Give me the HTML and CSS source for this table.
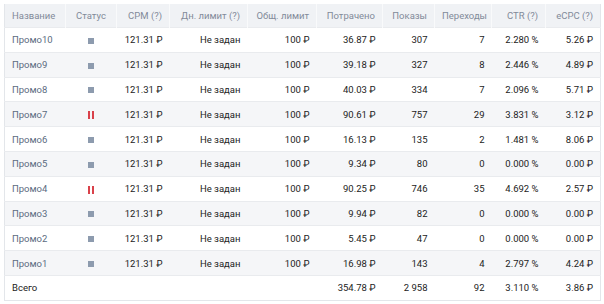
FILE: index.html
```html
<!DOCTYPE html>
<html lang="ru">
<head>
<meta charset="utf-8">
<link rel="stylesheet" href="styles.css">
</head>
<body>
<table class="stats">
  <colgroup>
    <col class="c-name"><col class="c-status"><col class="c-cpm"><col class="c-day"><col class="c-total"><col class="c-spent"><col class="c-views"><col class="c-clicks"><col class="c-ctr"><col class="c-ecpc">
  </colgroup>
  <thead>
    <tr>
      <th class="left">Название</th>
      <th class="center">Статус</th>
      <th>CPM (?)</th>
      <th>Дн. лимит (?)</th>
      <th>Общ. лимит</th>
      <th>Потрачено</th>
      <th>Показы</th>
      <th>Переходы</th>
      <th>CTR (?)</th>
      <th>eCPC (?)</th>
    </tr>
  </thead>
  <tbody>
    <tr><td class="name">Промо10</td><td class="center"><span class="st-stop"></span></td><td>121.31 ₽</td><td>Не задан</td><td>100 ₽</td><td>36.87 ₽</td><td>307</td><td>7</td><td>2.280 %</td><td>5.26 ₽</td></tr>
    <tr><td class="name">Промо9</td><td class="center"><span class="st-stop"></span></td><td>121.31 ₽</td><td>Не задан</td><td>100 ₽</td><td>39.18 ₽</td><td>327</td><td>8</td><td>2.446 %</td><td>4.89 ₽</td></tr>
    <tr><td class="name">Промо8</td><td class="center"><span class="st-stop"></span></td><td>121.31 ₽</td><td>Не задан</td><td>100 ₽</td><td>40.03 ₽</td><td>334</td><td>7</td><td>2.096 %</td><td>5.71 ₽</td></tr>
    <tr><td class="name">Промо7</td><td class="center"><span class="st-pause"></span></td><td>121.31 ₽</td><td>Не задан</td><td>100 ₽</td><td>90.61 ₽</td><td>757</td><td>29</td><td>3.831 %</td><td>3.12 ₽</td></tr>
    <tr><td class="name">Промо6</td><td class="center"><span class="st-stop"></span></td><td>121.31 ₽</td><td>Не задан</td><td>100 ₽</td><td>16.13 ₽</td><td>135</td><td>2</td><td>1.481 %</td><td>8.06 ₽</td></tr>
    <tr><td class="name">Промо5</td><td class="center"><span class="st-stop"></span></td><td>121.31 ₽</td><td>Не задан</td><td>100 ₽</td><td>9.34 ₽</td><td>80</td><td>0</td><td>0.000 %</td><td>0.00 ₽</td></tr>
    <tr><td class="name">Промо4</td><td class="center"><span class="st-pause"></span></td><td>121.31 ₽</td><td>Не задан</td><td>100 ₽</td><td>90.25 ₽</td><td>746</td><td>35</td><td>4.692 %</td><td>2.57 ₽</td></tr>
    <tr><td class="name">Промо3</td><td class="center"><span class="st-stop"></span></td><td>121.31 ₽</td><td>Не задан</td><td>100 ₽</td><td>9.94 ₽</td><td>82</td><td>0</td><td>0.000 %</td><td>0.00 ₽</td></tr>
    <tr><td class="name">Промо2</td><td class="center"><span class="st-stop"></span></td><td>121.31 ₽</td><td>Не задан</td><td>100 ₽</td><td>5.45 ₽</td><td>47</td><td>0</td><td>0.000 %</td><td>0.00 ₽</td></tr>
    <tr><td class="name">Промо1</td><td class="center"><span class="st-stop"></span></td><td>121.31 ₽</td><td>Не задан</td><td>100 ₽</td><td>16.98 ₽</td><td>143</td><td>4</td><td>2.797 %</td><td>4.24 ₽</td></tr>
  </tbody>
  <tfoot>
    <tr><td class="left">Всего</td><td></td><td></td><td></td><td></td><td>354.78 ₽</td><td>2 958</td><td>92</td><td>3.110 %</td><td>3.86 ₽</td></tr>
  </tfoot>
</table>
</body>
</html>
```
FILE: styles.css
```css
html, body {
  margin: 0;
  padding: 0;
  background: #fff;
}
body {
  padding: 4px 4px 0 4px;
  font-family: Roboto, "Noto Sans", "Liberation Sans", sans-serif;
  font-size: 9.5px;
  color: #222;
}
.stats {
  border-collapse: collapse;
  table-layout: fixed;
  width: 596px;
  border: 1px solid #e3e6ea;
  border-top: none;
}
.c-name { width: 61px; }
.c-status { width: 51px; }
.c-cpm { width: 53px; }
.c-day { width: 78px; }
.c-total { width: 69px; }
.c-spent { width: 66px; }
.c-views { width: 52px; }
.c-clicks { width: 57px; }
.c-ctr { width: 54px; }
.c-ecpc { width: 55px; }
.stats th, .stats td {
  padding: 0 7px 0 7px;
  text-align: right;
  white-space: nowrap;
  overflow: hidden;
}
.stats th {
  height: 23px;
  background: #f0f2f5;
  color: #828a99;
  font-weight: normal;
  border-left: 1px solid #f9fafb;
}
.stats th:first-child { border-left: none; }
.stats td {
  height: 24.8px;
  border-top: 1px solid #e9ebee;
  box-sizing: border-box;
}
.stats tbody tr:nth-child(even) td { background: #f5f6f8; }
.stats .left { text-align: left; }
.stats .center { text-align: center; padding: 0; }
.stats td.name { text-align: left; color: #5b6b80; }
.stats tfoot td { color: #222; }
.st-stop {
  display: inline-block;
  width: 6px;
  height: 6px;
  background: #8d9bae;
  vertical-align: middle;
}
.st-pause {
  display: inline-block;
  width: 2px;
  height: 8px;
  border-left: 2px solid #d9414a;
  border-right: 2px solid #d9414a;
  vertical-align: middle;
}
```
